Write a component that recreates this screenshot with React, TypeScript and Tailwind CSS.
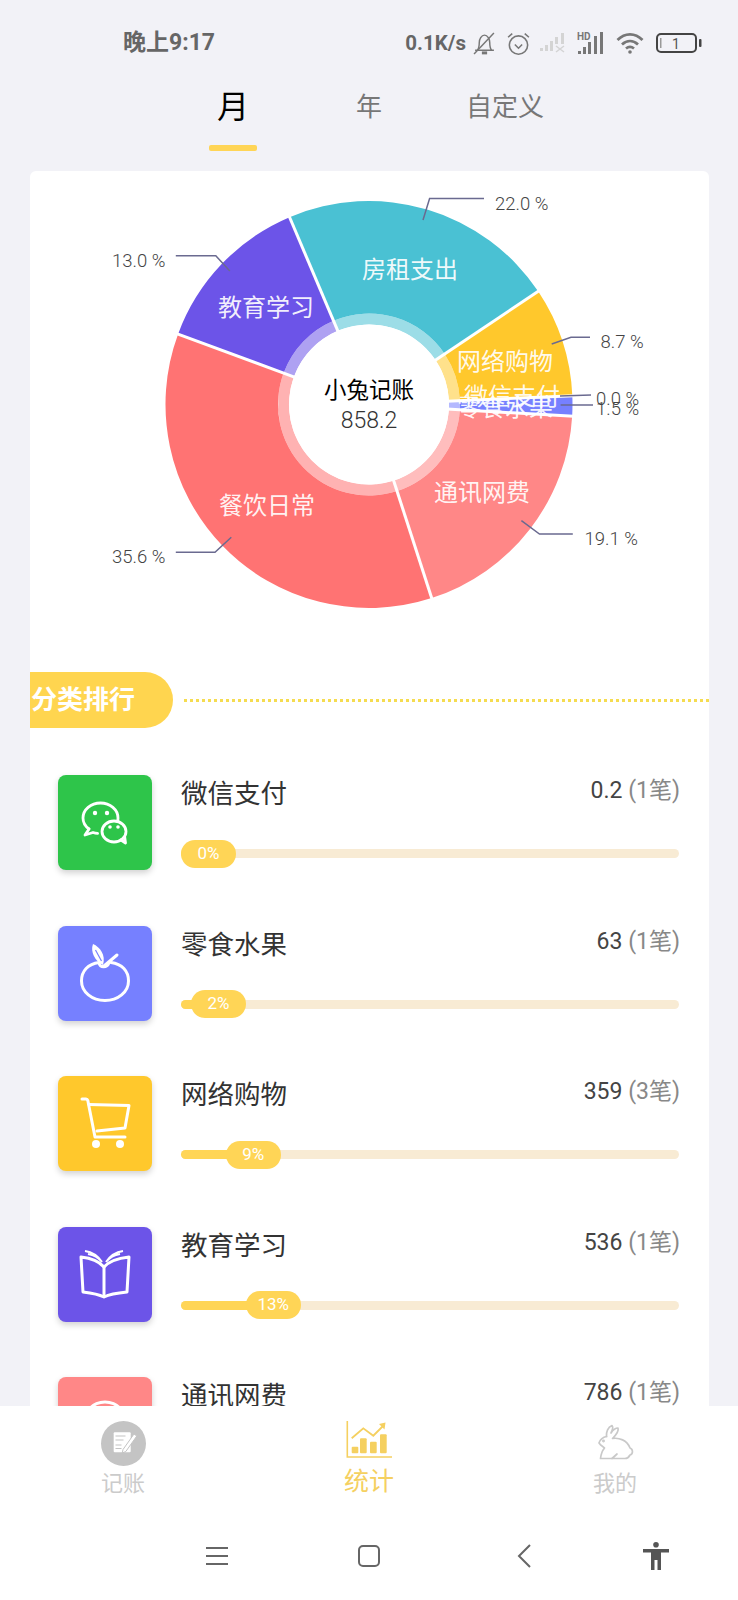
import React from 'react';

const FONT = { fontFamily: 'Roboto, "Noto Sans CJK SC", sans-serif' };

const CX = 369;
const CY = 404.5;
const START = 3.3;

const slices = [
  { pct: 19.1, color: '#FF8787' },
  { pct: 35.6, color: '#FF7373' },
  { pct: 13.0, color: '#6C54E8' },
  { pct: 22.0, color: '#4AC1D3' },
  { pct: 8.7, color: '#FFC82C' },
  { pct: 1.6, color: '#7680FF' },
];

const pieLabels = [
  { text: '房租支出', x: 410, y: 270 },
  { text: '教育学习', x: 266, y: 308 },
  { text: '网络购物', x: 505, y: 362 },
  { text: '微信支付', x: 512, y: 397 },
  { text: '零食水果', x: 505, y: 408 },
  { text: '餐饮日常', x: 267, y: 506 },
  { text: '通讯网费', x: 482, y: 493 },
];

const pctLabels = [
  { text: '22.0 %', x: 495, y: 204, line: '423,220 429.6,198.5 484,198.5' },
  { text: '13.0 %', x: 112, y: 261, line: '229.8,271 215.8,255.7 175.8,255.7' },
  { text: '35.6 %', x: 112, y: 557, line: '231.3,537.3 215,552.3 175.8,552.3' },
  { text: '19.1 %', x: 584.5, y: 539, line: '521.4,520.7 539.5,534 572.8,534' },
  { text: '8.7 %', x: 600.5, y: 342, line: '551.7,344 571,337.3 590,337.3' },
  { text: '0.0 %', x: 596, y: 399, line: '560,396 591,395' },
  { text: '1.5 %', x: 596, y: 409, line: '560.6,405 593,405' },
];

const point = (r: number, a: number) => {
  const t = (a * Math.PI) / 180;
  return { x: CX + r * Math.cos(t), y: CY + r * Math.sin(t) };
};

function sector(r0: number, r1: number, a0: number, a1: number) {
  const p = (r: number, a: number) => {
    const q = point(r, a);
    return `${q.x.toFixed(2)} ${q.y.toFixed(2)}`;
  };
  const large = a1 - a0 > 180 ? 1 : 0;
  return `M${p(r1, a0)}A${r1} ${r1} 0 ${large} 1 ${p(r1, a1)}L${p(r0, a1)}A${r0} ${r0} 0 ${large} 0 ${p(r0, a0)}Z`;
}

function PieChart() {
  let angle = START;
  const edges: number[] = [];
  return (
    <svg width="679" height="501" viewBox="30 171 679 501" style={FONT}>
      {slices.map(s => {
        const a0 = angle;
        angle += (s.pct / 100) * 360;
        edges.push(a0);
        return (
          <g key={s.color}>
            <path d={sector(91, 203.5, a0, angle)} fill={s.color} />
            <path d={sector(80, 91, a0, angle)} fill={s.color} fillOpacity="0.55" />
          </g>
        );
      })}
      {edges.map(a => {
        const p0 = point(78, a);
        const p1 = point(205, a);
        return <line key={a} x1={p0.x} y1={p0.y} x2={p1.x} y2={p1.y} stroke="#fff" strokeWidth="3" />;
      })}
      <circle cx={CX} cy={CY} r="80" fill="#fff" />
      {pieLabels.map(l => (
        <text key={l.text} x={l.x} y={l.y} textAnchor="middle" dominantBaseline="central" fontSize="24" fill="#fff" fillOpacity="0.92">
          {l.text}
        </text>
      ))}
      {pctLabels.map(l => (
        <g key={l.text}>
          <polyline points={l.line} fill="none" stroke="#6A6A90" strokeWidth="1.5" />
          <text x={l.x} y={l.y} dominantBaseline="central" fontSize="18.5" fontWeight="300" fill="#444">
            {l.text}
          </text>
        </g>
      ))}
      <text x={CX} y="390" textAnchor="middle" dominantBaseline="central" fontSize="22.5" fill="#000">
        小兔记账
      </text>
      <text x={CX} y="420" textAnchor="middle" dominantBaseline="central" fontSize="23" fontWeight="300" fill="#333">
        858.2
      </text>
    </svg>
  );
}

function StatusIcons() {
  return (
    <div className="flex items-center">
      <svg width="23" height="23" viewBox="0 0 22 22" className="ml-[7px]" fill="none" stroke="#777" strokeWidth="1.4">
        <path d="M2 17.500h18M4 17.500c2-2 2-4.500 2-7.500 0-3 2-7 5-7s5 4 5 7c0 3 0 5.500 2 7.500" />
        <path d="M1 21 20 1" />
        <path d="M8.500 20h5" strokeWidth="2.800" />
      </svg>
      <svg width="25" height="25" viewBox="0 0 24 23" className="ml-[10px]" fill="none" stroke="#777" strokeWidth="1.500">
        <circle cx="12" cy="13" r="8.800" />
        <path d="M8.500 12.500 12 16l3.500-3.500M2 5.500 6 2M22 5.500 18 2" />
      </svg>
      <svg width="27" height="20" viewBox="0 0 27 20" className="ml-[9px]" fill="#D4D4D4">
        <rect x="0" y="15" width="3" height="3" />
        <rect x="5" y="12" width="3" height="6" />
        <rect x="10" y="8" width="3" height="10" />
        <rect x="15" y="4" width="3" height="7" />
        <path d="M16 13l8 6M24 13l-8 6" stroke="#D4D4D4" strokeWidth="1.500" />
        <rect x="21" y="0" width="3" height="11" />
      </svg>
      <svg width="28" height="24" viewBox="0 0 28 24" className="ml-[10px]" fill="#777">
        <text x="0" y="9" fontSize="10" fontWeight="700" fontFamily="Roboto, sans-serif">HD</text>
        <rect x="1" y="20" width="3" height="3" />
        <rect x="6" y="16" width="3" height="7" />
        <rect x="11" y="11" width="3" height="12" />
        <rect x="17" y="5" width="3" height="18" />
        <rect x="23" y="1" width="3" height="22" />
      </svg>
      <svg width="28" height="22" viewBox="0 0 28 22" className="ml-[11px]" fill="none" stroke="#777" strokeWidth="2.800">
        <path d="M1.500 8C9 .5 19 .5 26.500 8" />
        <path d="M6 12.500C11 8 17 8 22 12.500" />
        <path d="M10 16.500c2.500-2 5.500-2 8 0" />
        <circle cx="14" cy="20" r="1.800" fill="#777" stroke="none" />
      </svg>
      <svg width="46" height="20" viewBox="0 0 46 20" className="ml-[12px]" fill="none">
        <rect x="1" y="1" width="39" height="18" rx="4" stroke="#444" strokeWidth="2" />
        <rect x="4" y="5" width="1.500" height="10" fill="#999" />
        <text x="20" y="15.500" textAnchor="middle" fontSize="14" fill="#555" fontFamily="Roboto, sans-serif">1</text>
        <rect x="43" y="6" width="2.500" height="8" rx="1" fill="#444" />
      </svg>
    </div>
  );
}

const iconStroke = { fill: 'none', stroke: '#fff', strokeWidth: 3, strokeLinecap: 'round', strokeLinejoin: 'round' } as const;

function WechatIcon() {
  return (
    <svg width="94" height="95" viewBox="0 0 94 95">
      <g {...iconStroke} strokeWidth="2.800">
        <path d="M31 54c-3.800-2.800-6-6.700-6-11 0-8.300 7.800-15 17.500-15S60 34.700 60 43c0 .8 0 1.500-.2 2.200" />
        <path d="M31 54 27 60l8-2.500c1.500.5 3 .8 4.600.9" />
        <ellipse cx="56" cy="56.500" rx="12" ry="10.500" />
        <path d="M63 65l4.500 3-.8-6" />
      </g>
      <g fill="#fff">
        <circle cx="37" cy="38" r="2.200" />
        <circle cx="49" cy="38" r="2.200" />
        <circle cx="52" cy="52" r="1.800" />
        <circle cx="60" cy="52" r="1.800" />
      </g>
    </svg>
  );
}

function FruitIcon() {
  return (
    <svg width="94" height="94" viewBox="0 0 94 94">
      <g {...iconStroke}>
        <path d="M41 36.500C30 38 23.500 45 23.500 55c0 11 10.500 19.500 23.500 19.500S70.500 66 70.500 55c0-10-6.500-17-17.500-18.500" />
        <path d="M46 40 59 29" />
        <path d="M41 37c1 5 8 5 10 0" />
      </g>
      <path d="M45 39C37 35 32 26 35 18c7 3 13 11 10 21Z" fill="#fff" />
      <path d="M37.500 24l6 11" stroke="#7680FF" strokeWidth="1.200" />
    </svg>
  );
}

function CartIcon() {
  return (
    <svg width="94" height="94" viewBox="0 0 94 94">
      <g {...iconStroke}>
        <path d="M24 23h4c1 0 1.500.5 1.800 1.500L37 61h30" />
        <path d="M31 28.500 71 29.500 67 52 39 55" />
      </g>
      <circle cx="38" cy="68" r="4" fill="#fff" />
      <circle cx="62" cy="68" r="4" fill="#fff" />
    </svg>
  );
}

function BookIcon() {
  return (
    <svg width="94" height="94" viewBox="0 0 94 94">
      <g {...iconStroke} strokeLinecap="butt">
        <path d="M46 40C40 33 32 31 23 30l2 35c8 1 15 2 21 5 6-3 13-4 23-5l2-35c-9 1-19 3-25 10Z" />
        <path d="M46 40v30" />
        <path d="M27 24c7 1 13 5 17 11M30 27c5 1 10 3 13 7M65 24c-7 1-13 5-17 11M62 27c-5 1-10 3-13 7" strokeWidth="2" />
      </g>
    </svg>
  );
}

function ChatIcon() {
  return (
    <svg width="94" height="95" viewBox="0 0 94 95">
      <circle cx="47" cy="47" r="22" {...iconStroke} />
    </svg>
  );
}

const rows = [
  { name: '微信支付', value: '0.2', count: '(1笔)', pct: 0, color: '#2EC54A', Icon: WechatIcon },
  { name: '零食水果', value: '63', count: '(1笔)', pct: 2, color: '#7680FF', Icon: FruitIcon },
  { name: '网络购物', value: '359', count: '(3笔)', pct: 9, color: '#FFC82C', Icon: CartIcon },
  { name: '教育学习', value: '536', count: '(1笔)', pct: 13, color: '#6C54E8', Icon: BookIcon },
  { name: '通讯网费', value: '786', count: '(1笔)', pct: 19, color: '#FF8787', Icon: ChatIcon },
];

function RankRow({ row }: { row: (typeof rows)[number] }) {
  const { Icon } = row;
  return (
    <div className="flex h-[95px]">
      <div
        className="w-[94px] h-[95px] shrink-0 rounded-[8px] shadow-[0_3px_6px_rgba(0,0,0,0.18)]"
        style={{ backgroundColor: row.color }}
      >
        <Icon />
      </div>
      <div className="ml-[29px] w-[499px]">
        <div className="flex h-[38px] items-center justify-between">
          <span className="text-[26.500px] text-[#333]">{row.name}</span>
          <span className="mb-[5px] text-[23px] text-[#444]">
            {row.value} <span className="text-[#888]">{row.count}</span>
          </span>
        </div>
        <div className="relative mt-[36px] h-[9px] w-[498px] rounded-full bg-[#F8EBD4]">
          <div className="h-full rounded-l-full bg-[#FFD556]" style={{ width: `${row.pct + 2}%` }} />
          <div
            className="absolute top-[-9.500px] flex h-[28px] w-[55px] items-center justify-center rounded-[14px] bg-[#FFD556] text-[17px] text-white"
            style={{ left: `${row.pct}%` }}
          >
            {row.pct}%
          </div>
        </div>
      </div>
    </div>
  );
}

function TabBar() {
  return (
    <div className="absolute bottom-0 left-0 right-0 h-[194px] bg-white">
      <div className="grid grid-cols-3 pt-[15px]">
        <div className="flex flex-col items-center">
          <svg width="45" height="45" viewBox="0 0 45 45">
            <circle cx="22.500" cy="22.500" r="22.500" fill="#C4C4C4" />
            <rect x="12.700" y="11.300" width="17" height="20" rx="1" fill="#fff" />
            <path d="M14.500 15h10M14.500 19h8M14.500 24h6M14.500 27.500h6" stroke="#C4C4C4" strokeWidth="1.200" />
            <path d="M22 28.500 33 13l2.800 2-11 15.500-3.500 1.500Z" fill="#fff" stroke="#C4C4C4" strokeWidth="1" />
          </svg>
          <span className="mt-[3px] h-[30px] text-[22px] leading-[30px] text-[#CBCBCB]">记账</span>
        </div>
        <div className="flex flex-col items-center">
          <svg width="46" height="45" viewBox="0 0 46 45">
            <path d="M1.300 0v36H46" fill="none" stroke="#F5D060" strokeWidth="1.600" />
            <g fill="#F5D060">
              <rect x="5.700" y="25.700" width="6.600" height="6.600" rx="1" />
              <rect x="14" y="17.300" width="6.700" height="15" rx="1" />
              <rect x="24" y="20.700" width="6.700" height="11.600" rx="1" />
              <rect x="34" y="13.300" width="6.700" height="19" rx="1" />
            </g>
            <path d="M5.700 17.300 17.300 7.300 27.300 14.700 37 5" fill="none" stroke="#F5D060" strokeWidth="1.800" />
            <path d="M33 3 39.500 1.500 38.500 8.500Z" fill="#F5D060" />
          </svg>
          <span className="mt-[1px] h-[30px] text-[25px] leading-[30px] text-[#F5D060]">统计</span>
        </div>
        <div className="flex flex-col items-center">
          <svg width="40" height="45" viewBox="0 0 40 45" fill="none" stroke="#C9C9C9" strokeWidth="1.700" strokeLinejoin="round" strokeLinecap="round">
            <path d="M11.500 15.500C11 11 13 6 17 4.500c1.500 1.500.5 4.500-1 7.500 2-3 4-5 7-5 1 3-2 7-5.500 10.500 6.500-1 14.500 1.500 17.500 9.500 3 1 3.500 6 0 7-1 2-2 3.500-5 3.500H17l5-4.500" />
            <path d="M11.500 15.500C8 16 4.500 19 4 22c2 3 5 4 5.500 5-2.500 3-3.500 6-4 10.500H17" />
            <circle cx="8.500" cy="20" r=".6" />
          </svg>
          <span className="mt-[3px] h-[30px] text-[22px] leading-[30px] text-[#CBCBCB]">我的</span>
        </div>
      </div>
      <div className="mt-[35px] flex h-[44px] items-center pl-[206px]">
        <svg width="22" height="20" viewBox="0 0 22 20" stroke="#666" strokeWidth="2">
          <path d="M0 2h22M0 10h22M0 18h22" />
        </svg>
        <svg width="22" height="24" viewBox="0 0 22 24" className="ml-[130px]" fill="none" stroke="#666" strokeWidth="2">
          <rect x="1" y="2" width="20" height="20" rx="4" />
        </svg>
        <svg width="14" height="24" viewBox="0 0 14 24" className="ml-[137px]" fill="none" stroke="#666" strokeWidth="2">
          <path d="M13 1 2 12l11 11" />
        </svg>
        <svg width="26" height="28" viewBox="0 0 26 28" className="ml-[112px]" fill="#555">
          <circle cx="13" cy="2.800" r="2.800" />
          <path d="M0 7h26v3.500h-8V28h-3.500V18h-3v10H8V10.500H0Z" />
        </svg>
      </div>
    </div>
  );
}

export default function App() {
  return (
    <div className="relative h-[1600px] w-[738px] overflow-hidden bg-[#F2F2F7]" style={FONT}>
      <div className="flex h-[86px] items-center justify-between pl-[123px] pr-[36px]">
        <span className="text-[23px] font-bold text-[#666]">晚上9:17</span>
        <div className="flex items-center">
          <span className="text-[20.500px] font-bold text-[#666]">0.1K/s</span>
          <StatusIcons />
        </div>
      </div>
      <div className="flex h-[85px] pl-[165px]">
        <div className="flex w-[136px] flex-col items-center">
          <span className="h-[42px] text-[32px] leading-[42px] text-black">月</span>
          <div className="mt-[17px] h-[6px] w-[48px] rounded-[2px] bg-[#FFD556]" />
        </div>
        <span className="h-[42px] w-[136px] text-center text-[26px] leading-[42px] text-[#777]">年</span>
        <span className="h-[42px] w-[136px] text-center text-[26px] leading-[42px] text-[#777]">自定义</span>
      </div>
      <div className="ml-[30px] w-[679px] rounded-t-[6px] bg-white">
        <PieChart />
        <div className="flex h-[56px] items-center">
          <div className="flex h-[56px] w-[143px] items-center rounded-r-[28px] bg-[#FFD54F] pl-[1px] text-[26px] font-bold text-white">
            分类排行
          </div>
          <div className="ml-[11px] flex-1 border-t-[3px] border-dotted border-[#F5DC50]" />
        </div>
        <div className="mt-[47px] flex flex-col gap-[55.500px] pl-[28px]">
          {rows.map(row => (
            <RankRow key={row.name} row={row} />
          ))}
        </div>
      </div>
      <TabBar />
    </div>
  );
}
